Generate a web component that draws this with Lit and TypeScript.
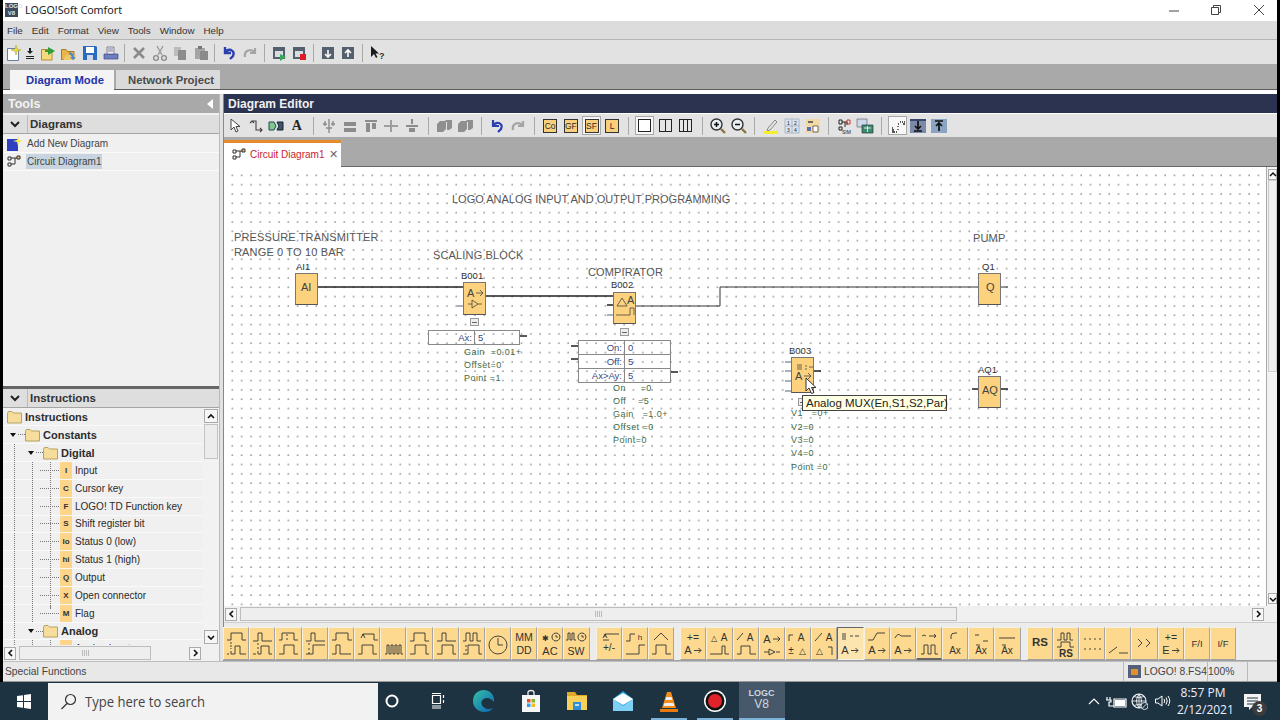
import { css, html, LitElement, svg } from 'lit';
import { customElement } from 'lit/decorators.js';

// canvas origin in page coordinates, diagram data below is given in page px
const OX = 224;
const OY = 167;

type Txt = [number, number, string, number?, boolean?];
interface PalBtn {
  d?: string;
  t?: Txt[];
  on?: boolean;
  low?: boolean;
}

// small arrow drawn next to the A / E of the analog buttons
const AR = 'M14 23.500H21M18.500 21L21 23.500L18.500 26';
const A: Txt = [8, 27, 'A', 11];

const PALETTE: PalBtn[][] = [
  [
    { d: 'M4 13H8V6H19V13H23M8 15V17M4 27H6M8 20V18M8 21V22M8 24V27H12V19H17V27H23' },
    { d: 'M4 14H9V6H13V14H23M9 16V18M4 27H7M9 20V22M9 24V27H12V19H20V27H23' },
    { d: 'M4 13H7V6H19V13H23M12 7V9M12 11V13M4 27H9V18H19V27H23' },
    { d: 'M4 14H9V6H13V14H23M7 16V18M7 21V23M4 27H11V18H23M7 25V27' },
    { d: 'M4 13H8V6H20V13H24M4 27H8V18H12V27H23' },
    { d: 'M9 9V7H20V13H24M7 11L9 7L11 11M4 27H8V18H19V27H23' },
    { d: 'M5 27H7V18H9V27H11V18H13V27H15V18H17V27H19V18H21V27H23' },
    { d: 'M4 14H8V6H19V14H23M4 27H9V18H20V27H23' },
    { d: 'M4 14H9V6H13V14H23M4 27H9V18H20V27H23' },
    { d: 'M4 14H7V6H11V14H14V6H18V14H22M4 27H9V18H20V27H23M7 18V20M7 22V24' },
    { d: 'M13 11V18H18M22 18A9 9 0 1 1 4 18A9 9 0 1 1 22 18' },
    { t: [[13, 14, 'MM', 10.5], [13, 27, 'DD', 10.5]] },
    { d: 'M19 6A4 4 0 1 1 18.900 6M19 8V10H21', t: [[8, 14, '✱', 8], [13, 28, 'AC', 11]] },
    { d: 'M3 13H5V6H7V13H9V6H11V13H13M19 6A4 4 0 1 1 18.900 6M19 8V10H21', t: [[13, 28, 'SW', 10.5]] },
  ],
  [
    { d: 'M9 10V7H23M7 11L9 7L11 11M7 13H13', t: [[13, 24, '+/-', 10]] },
    { d: 'M4 14H8V7H13M4 27H17V18H23', t: [[18, 13, 'h', 8]] },
    { d: 'M6 13L13 6L20 13M4 27H8V18H18V27H23' },
  ],
  [
    { d: AR, t: [[13, 14, '+=', 10.5], A] },
    { d: 'M4 27H16V19H19V27H23', t: [[8, 14, '△', 8], [18, 14, 'A', 10]] },
    { d: 'M4 13L10 6M4 27H8V19H17V27H23', t: [[17, 14, 'A', 10]] },
    { d: 'M5 25H10M17 25H21M10 22L16 25L10 28ZM14 12H21M18.500 9.500L21 12L18.500 14.500', t: [[8, 16, 'A', 11]] },
    { d: 'M4 14V8H8', t: [[16, 14, 'A', 10], [6, 27, '±', 10], [17, 27, '△', 9]] },
    { d: 'M4 14L11 6M17 20H21V28', t: [[18, 14, 'A', 10], [8, 27, '△', 9]] },
    { d: `M6 6V13M8 6V13M13 9H16M18 9H22${AR}`, on: true, t: [A] },
    { d: `M4 13H9L13 6H21${AR}`, t: [A] },
    { d: `M5 11Q8 5 11 9H21${AR}`, t: [A] },
    { d: 'M5 27H8V18H12V27H15V18H19V27H22M6 9Q8 7 10 9M13 9H20M18 7L20 9L18 11', low: true },
    { d: 'M9 12V9Q9 6 13 6H15', t: [[13, 27, 'Ax', 10]] },
    { d: 'M7 8H11M15 14H20M8 18H12', t: [[13, 27, 'Ax', 10]] },
    { d: 'M5 11H21M8 18H12', t: [[13, 27, 'Ax', 10]] },
  ],
  [
    { t: [[13, 19, 'RS', 11.5, true]] },
    { d: 'M4 13H8V6H11V13H14V6H17V13H20M4 20H8V15H17V20H21', t: [[13, 30, 'RS', 10, true]] },
    { d: 'M5 12H7M10 12H12M15 12H17M20 12H22M5 22H7M10 22H12M15 22H17M20 22H22' },
    { d: 'M4 26L12 20M14 26H23' },
    { d: 'M7 12L11 16L7 20M15 12L19 16L15 20' },
    { d: AR, t: [[13, 14, '+=', 10.5], [8, 27, 'E', 11]] },
    { t: [[13, 20, 'F/I', 9.5]] },
    { t: [[13, 20, 'I/F', 9.5]] },
  ],
];

const MENU = ['File', 'Edit', 'Format', 'View', 'Tools', 'Window', 'Help'];

const LEAVES = [
  ['I', 'Input'],
  ['C', 'Cursor key'],
  ['F', 'LOGO! TD Function key'],
  ['S', 'Shift register bit'],
  ['lo', 'Status 0 (low)'],
  ['hi', 'Status 1 (high)'],
  ['Q', 'Output'],
  ['X', 'Open connector'],
  ['M', 'Flag'],
];

// text on the canvas: x, centre y, text, class
const LABELS: [number, number, string, string][] = [
  [452, 199, 'LOGO ANALOG INPUT AND OUTPUT PROGRAMMING', 'note wide'],
  [234, 237, 'PRESSURE TRANSMITTER', 'note'],
  [234, 252, 'RANGE 0 TO 10 BAR', 'note'],
  [433, 255, 'SCALING BLOCK', 'note'],
  [588, 272, 'COMPIRATOR', 'note'],
  [973, 238, 'PUMP', 'note'],
  [296, 267, 'AI1', 'tag'],
  [461, 276, 'B001', 'tag'],
  [611, 285, 'B002', 'tag'],
  [789, 351, 'B003', 'tag'],
  [982, 267, 'Q1', 'tag'],
  [978, 370, 'AQ1', 'tag'],
  [464, 352, 'Gain  =0.01+', 'par'],
  [464, 365, 'Offset=0', 'par'],
  [464, 378, 'Point =1', 'par'],
  [613, 388, 'On     =0', 'par'],
  [613, 401, 'Off    =5', 'par'],
  [613, 414, 'Gain   =1.0+', 'par'],
  [613, 427, 'Offset =0', 'par'],
  [613, 440, 'Point=0', 'par'],
  [791, 413, 'V1   =0+', 'par'],
  [791, 427, 'V2=0', 'par'],
  [791, 440, 'V3=0', 'par'],
  [791, 453, 'V4=0', 'par'],
  [791, 467, 'Point =0', 'par'],
];

const BLOCKS: { x: number; y: number; h: number; g: unknown }[] = [
  { x: 295, y: 273, h: 32, g: svg`<text x="5" y="17" class="bt">AI</text>` },
  {
    x: 463,
    y: 282,
    h: 33,
    g: svg`<text x="3" y="14" class="bt">A</text><path d="M12 10H19M16 7L19 10L16 13M4 21H8M14 21H18M8 17L14 21L8 25Z"/>`,
  },
  {
    x: 613,
    y: 292,
    h: 32,
    g: svg`<path d="M3 13L8 5L13 13ZM2 22H16V15H20V22"/><text x="13" y="11" class="bt">A</text>`,
  },
  {
    x: 791,
    y: 357,
    h: 36,
    g: svg`<path d="M5 7H10M5 9H10M5 11H10M13 8H15M13 11H15M17 9H21M12 18H19M16 15L19 18L16 21"/><text x="3" y="22" class="bt">A</text>`,
  },
  { x: 978, y: 273, h: 32, g: svg`<text x="7" y="17" class="bt">Q</text>` },
  { x: 978, y: 376, h: 32, g: svg`<text x="3" y="17" class="bt">AQ</text>` },
];

const TABLES = [
  { x: 428, y: 330, w: 92, split: 46, rows: [['Ax:', '5']] },
  { x: 578, y: 340, w: 93, split: 46, rows: [['On:', '0'], ['Off:', '5'], ['Ax>Ay:', '5']] },
];

const COLLAPSERS = [[470, 318], [620, 328], [798, 398]];

const ico = (inner: unknown, w = 18, h = 18) =>
  html`<svg class="ic" width=${w} height=${h} viewBox="0 0 ${w} ${h}">${inner}</svg>`;

const bars = (c = '#8c8c8c') => svg`<path fill=${c} d="M3 5H15V9H3ZM3 11H15V15H3Z"/>`;
const sq2 = svg`<path fill="#8f8f8f" d="M2 7L5 4H11V12L8 15H2ZM9 5L11 3H17V11L14 13H12V5Z"/>`;
const yellowBtn = (t: string, sel = false) =>
  html`<span class="yb ${sel ? 'sel' : ''}"><b>${t}</b></span>`;

// main toolbar: [width, icon] or null for a separator
const MAIN_TOOLS: ([number, unknown] | null)[] = [
  [19, ico(svg`<path fill="#fff" stroke="#6a7ea8" d="M3.500 4.500H12L14.500 7V16.500H3.500Z"/><path d="M12 1L13 5L17 6L13 7L12 11L11 7L7 6L11 5Z" fill="#f4e23a" stroke="#9a9a20" stroke-width=".5"/>`)],
  [15, ico(svg`<path d="M6 4H8V7H10L7 10L4 7H6ZM3 13H11V12H3ZM3 15H11V14H3Z" fill="#222"/>`, 14, 18)],
  [21, ico(svg`<path fill="#f6d97a" stroke="#b09030" d="M2.500 5.500H13V16H2.500Z"/><path d="M9 3L16 7L9 11V8H6V6H9Z" fill="#2f9e3a"/>`)],
  [21, ico(svg`<path fill="#e9b44c" stroke="#a77c22" d="M1.500 5.500H6L7.500 7.500H14V15.500H1.500Z"/><path d="M6 11L16 11L14 16H3Z" fill="#f0c868"/><path d="M9 8Q14 9 14 13H16L13 16L10 13H12Q11 11 9 10Z" fill="#4a8ad0"/>`)],
  [21, ico(svg`<path fill="#2a6cc0" d="M2 2H15L16 3V16H2Z"/><path fill="#fff" d="M5 3H13V9H5Z"/><path fill="#cfd8e4" d="M6 11H12V16H6Z"/>`)],
  [21, ico(svg`<path fill="#6d7fc0" stroke="#39478c" stroke-width=".7" d="M2 10H16V15H2Z"/><path fill="#eef" stroke="#556" stroke-width=".7" d="M5 3H12V10H5Z"/><path d="M6 5H11M6 7H11" stroke="#556" stroke-width=".7"/>`)],
  null,
  [21, ico(svg`<path d="M4 4L14 14M14 4L4 14" stroke="#8a8a8a" stroke-width="2.600"/>`)],
  [20, ico(svg`<path d="M6 2L11 11M12 2L7 11" stroke="#9a9a9a" stroke-width="1.400"/><circle cx="5" cy="14" r="2.400" fill="none" stroke="#8a8a8a" stroke-width="1.300"/><circle cx="13" cy="14" r="2.400" fill="none" stroke="#8a8a8a" stroke-width="1.300"/>`)],
  [21, ico(svg`<path fill="#bcbcbc" d="M3 3H10V12H3Z"/><path fill="#8c8c8c" d="M7 6H15V16H7Z"/>`)],
  [20, ico(svg`<path fill="#a5a5a5" d="M3 4H13V15H3Z"/><path fill="#8a8a8a" d="M8 7H16V16H8Z"/><path fill="#777" d="M6 2H10V5H6Z"/>`)],
  null,
  [21, ico(svg`<path d="M5 3V9H11M5 9Q7 5 11 6Q15 8 13 12L10 15" fill="none" stroke="#2a3fb0" stroke-width="2.400"/>`)],
  [21, ico(svg`<path d="M14 4V9H9M14 9Q11 5 7 6.500Q3 8 4 13" fill="none" stroke="#a4a4a4" stroke-width="2.200"/>`)],
  null,
  [21, ico(svg`<path fill="#55606e" d="M3 3H15V15H3Z"/><path fill="#d8dde4" d="M5 7H13V13H5Z"/><path fill="#34a853" d="M10 10L16 13L10 17Z"/>`)],
  [20, ico(svg`<path fill="#55606e" d="M3 3H15V15H3Z"/><path fill="#d8dde4" d="M5 7H13V13H5Z"/><path fill="#e01b24" d="M10 10H16V16H10Z"/>`)],
  null,
  [21, ico(svg`<path fill="#55606e" d="M3 3H15V15H3Z"/><path d="M9 6V12M6 10L9 13L12 10" fill="none" stroke="#fff" stroke-width="1.600"/>`)],
  [20, ico(svg`<path fill="#55606e" d="M3 3H15V15H3Z"/><path d="M9 13V7M6 9L9 6L12 9" fill="none" stroke="#fff" stroke-width="1.600"/>`)],
  null,
  [21, ico(svg`<path d="M4 2V13L7 10L9 14L10.500 13L8.500 9.500H12Z" fill="#1a1a1a"/><text x="12" y="15" font-size="9" font-weight="700" font-family="Liberation Sans" fill="#333">?</text>`)],
];

const EDIT_TOOLS: (unknown | null)[] = [
  ico(svg`<path d="M5 2V13L8 10L10 15L12 14L10 9.500H14Z" fill="#fff" stroke="#444"/>`),
  ico(svg`<path d="M5 4H9V13H15M3 6L5 4L7 6M13 11L15 13L13 15" fill="none" stroke="#444" stroke-width="1.100"/>`),
  ico(svg`<path d="M2 5H7L9 9L7 13H2Z" fill="#7fc98f" stroke="#245"/><path d="M10 5H16V13H10L12 9Z" fill="#456" stroke="#123"/>`),
  html`<span class="bigA">A</span>`,
  null,
  ico(svg`<path d="M9 2V16M5 4V9M13 4V9M3 7H7M11 7H15M6 11H12" stroke="#8c8c8c" stroke-width="1.400"/>`),
  ico(bars()),
  ico(svg`<path fill="#8c8c8c" d="M3 3H15V5H3ZM4 6H8V15H4ZM10 6H14V12H10Z"/>`),
  ico(svg`<path fill="#8c8c8c" d="M2 8H8V10H2ZM10 8H16V10H10ZM8 3H10V15H8Z" opacity=".8"/>`),
  ico(svg`<path fill="#8c8c8c" d="M3 8H15V10H3ZM8 2H10V7H8ZM6 11H12V15H6Z"/>`),
  null,
  ico(sq2),
  ico(sq2),
  null,
  ico(svg`<path d="M5 3V9H11M5 9Q7 5 11 6Q15 8 13 12L10 15" fill="none" stroke="#2a3fb0" stroke-width="2.200"/>`),
  ico(svg`<path d="M14 4V9H9M14 9Q11 5 7 6.500Q3 8 4 13" fill="none" stroke="#a4a4a4" stroke-width="2.200"/>`),
  null,
  yellowBtn('Co'),
  yellowBtn('GF'),
  yellowBtn('SF', true),
  yellowBtn('L'),
  null,
  html`<span class="lay sel"><i></i></span>`,
  html`<span class="lay"><i class="c2"></i></span>`,
  html`<span class="lay"><i class="c3"></i></span>`,
  null,
  ico(svg`<circle cx="7.500" cy="7.500" r="5.500" fill="#e8eef4" stroke="#333" stroke-width="1.400"/><path d="M5 7.500H10M7.500 5V10" stroke="#111" stroke-width="1.500"/><path d="M12 12L16 16" stroke="#8a7440" stroke-width="2.400"/>`),
  ico(svg`<circle cx="7.500" cy="7.500" r="5.500" fill="#e8eef4" stroke="#333" stroke-width="1.400"/><path d="M5 7.500H10" stroke="#111" stroke-width="1.500"/><path d="M12 12L16 16" stroke="#8a7440" stroke-width="2.400"/>`),
  null,
  ico(svg`<path d="M6 11L13 3L15 5L8 13L5 14Z" fill="#e4e4e4" stroke="#888"/><path d="M2 14H16V17H2Z" fill="#f4ee2e"/>`),
  ico(svg`<path fill="#dbe4ee" stroke="#8a9ab0" stroke-width=".6" d="M2 2H16V16H2Z"/><path d="M9 2V16M2 9H16" stroke="#8a9ab0" stroke-width=".6"/><text x="4" y="8" class="ti">1</text><text x="11" y="8" class="ti">2</text><text x="4" y="15" class="ti">3</text><text x="11" y="15" class="ti">4</text>`),
  ico(svg`<path fill="#f2d9a8" d="M2 2H16V16H2Z"/><path d="M4 5H9" stroke="#444" stroke-width="1.500"/><path fill="#5a6fc0" d="M3 10H7V14H3Z"/><path fill="#fff" stroke="#333" stroke-width=".7" d="M9 9H14V15H9Z"/>`),
  null,
  ico(svg`<path fill="none" stroke="#222" d="M3 3H6V7H3ZM3 10H6V13H3ZM6 5H11V8M9 5V10"/><path fill="none" stroke="#c33" d="M11 3H14V7H11Z"/><text x="6" y="17" class="ti">SIM</text>`),
  ico(svg`<path fill="#cdd9e6" stroke="#667" stroke-width=".7" d="M1 2H11V10H1Z"/><path fill="#3e8a6e" stroke="#234" stroke-width=".7" d="M6 8H17V16H6Z"/><path d="M8 11H15M11.500 9V15" stroke="#fff" stroke-width=".8"/>`),
  null,
  html`<span class="lay dots">${ico(svg`<path d="M3 15H6M7 15H8M9 13V12M9 10V9M9 7H10M11 5H12M13 5H14M15 5H16M14 7H16M3 13H5M3 11H4" stroke="#222" stroke-width="1.300"/>`, 18, 18)}</span>`,
  ico(svg`<path fill="#7a8aa8" d="M1 2H17V16H1Z"/><path fill="#39476e" d="M1 2H17V4H1Z"/><path d="M9 4V12M6 9L9 12L12 9M5 14H13" fill="none" stroke="#111" stroke-width="1.700"/>`),
  ico(svg`<path fill="#8aa4c2" d="M1 2H17V16H1Z"/><path d="M9 14V7M6 9L9 6L12 9M5 4H13" fill="none" stroke="#111" stroke-width="1.700"/>`),
];

@customElement('app-root')
export class AppRoot extends LitElement {
  static override styles = css`
    :host {
      display: block;
      width: 1280px;
      height: 720px;
      overflow: hidden;
      background: #000;
      font-family: 'Liberation Sans', Arial, sans-serif;
      font-size: 11px;
      color: #2a2a2a;
    }
    .win {
      height: 682px;
      margin: 0 3px;
      display: flex;
      flex-direction: column;
      background: #fff;
    }
    svg {
      display: block;
    }
    .ic {
      flex: none;
    }

    /* title + menu */
    .title {
      height: 21px;
      background: #fff;
      display: flex;
      align-items: center;
      padding: 0 0 2px 2px;
      box-sizing: border-box;
      font: 10.700px 'Noto Sans', sans-serif;
      color: #222;
    }
    .app-ico {
      width: 13px;
      height: 14px;
      margin-right: 7px;
      background: #3d4a5c;
      color: #dfe4ea;
      font: 700 6px/7px 'Liberation Sans', sans-serif;
      text-align: center;
    }
    .caps {
      margin-left: auto;
      margin-right: -3px;
      display: flex;
      color: #333;
    }
    .caps span {
      width: 42.500px;
      display: flex;
      justify-content: center;
    }
    .menu {
      height: 17px;
      padding: 1px 0 0 4px;
      background: #dcdcdc;
      border-bottom: 1px solid #b4b4b4;
      display: flex;
      align-items: center;
      gap: 9px;
      font-size: 9.800px;
      color: #333;
    }
    .bar {
      height: 23px;
      padding-top: 1px;
      background: #e2e2e2;
      display: flex;
      align-items: center;
    }
    .cell {
      display: flex;
      justify-content: center;
      align-items: center;
      flex: none;
    }
    .sep {
      width: 1px;
      height: 18px;
      background: #a8a8a8;
      margin: 0 3.400px;
      flex: none;
    }
    .band {
      background: #a9a9a9;
      border-bottom: 1px solid #5c5c5c;
      display: flex;
      align-items: flex-end;
      padding-left: 7px;
      gap: 2px;
      box-sizing: border-box;
      height: 26px;
      font-weight: 700;
      font-size: 11.300px;
    }
    .mode {
      height: 19px;
      display: flex;
      align-items: center;
      justify-content: center;
      width: 104px;
      padding-left: 6px;
      box-sizing: border-box;
      background: #dadada;
      color: #4a4a4a;
    }
    .mode.on {
      background: #f4f4f4;
      color: #2433a8;
      height: 20px;
      margin-bottom: -1px;
    }
    .gap {
      height: 4px;
      background: #fff;
    }

    /* work area */
    .work {
      flex: 1;
      min-height: 0;
      display: flex;
    }
    .left {
      width: 216px;
      display: flex;
      flex-direction: column;
      background: #f0f0f0;
      flex: none;
    }
    .split {
      width: 5px;
      background: #e2e2e2;
      border-left: 1px solid #bbb;
      border-right: 1px solid #888;
      box-sizing: border-box;
      flex: none;
    }
    .tools-h {
      height: 19px;
      background: #a9a9a9;
      color: #f4f4f4;
      font-weight: 700;
      font-size: 12.500px;
      display: flex;
      align-items: center;
      justify-content: space-between;
      padding: 0 6px 0 5px;
      margin-bottom: 2px;
    }
    .tools-h i {
      border: 5px solid transparent;
      border-right: 6px solid #fff;
      border-left: 0;
    }
    .sec {
      height: 19px;
      background: #dedede;
      display: flex;
      align-items: center;
      font-weight: 700;
      font-size: 11.500px;
      color: #333;
      flex: none;
      border-bottom: 1px solid #a5a5a5;
      box-sizing: border-box;
    }
    .sec .chev {
      width: 24px;
      height: 100%;
      border-right: 1px solid #bbb;
      margin-right: 2px;
      display: flex;
      align-items: center;
      justify-content: center;
    }
    .list {
      flex: 1;
      padding-top: 1px;
    }
    .li {
      height: 18px;
      display: flex;
      align-items: center;
      padding-left: 3px;
      border-bottom: 1px solid #fafafa;
      box-sizing: border-box;
      font-size: 10px;
      color: #444;
      gap: 3px;
    }
    .li span {
      padding: 2px 1px;
    }
    .li .hl {
      background: #c8d4e0;
    }
    .rule {
      height: 3px;
      background: #666;
      flex: none;
    }
    .tree {
      height: 237px;
      display: flex;
      flex: none;
    }
    .rows {
      flex: 1;
      overflow: hidden;
      min-width: 0;
      padding-top: 0.500px;
    }
    .row {
      height: 17.850px;
      display: flex;
      align-items: center;
      border-bottom: 1px solid #fafafa;
      box-sizing: border-box;
      white-space: nowrap;
      font-size: 10px;
    }
    .row b {
      font-size: 11px;
      color: #2c2c2c;
    }
    .g {
      width: 18px;
      height: 100%;
      flex: none;
      box-sizing: border-box;
      background: linear-gradient(#777 50%, transparent 50%) 11px 0 / 1px 2px repeat-y;
    }
    .g.hook {
      width: 21px;
      background:
        linear-gradient(90deg, #777 50%, transparent 50%) 11px 50% / 2px 1px repeat-x,
        linear-gradient(#777 50%, transparent 50%) 11px 0 / 1px 2px repeat-y;
    }
    .g.hook.end {
      background:
        linear-gradient(90deg, #777 50%, transparent 50%) 11px 50% / 2px 1px repeat-x,
        linear-gradient(#777 50%, transparent 50%) 11px 0 / 1px 50% no-repeat;
    }
    .leaf {
      width: 12px;
      height: 100%;
      background: #fcd48a;
      font-size: 8px;
      font-weight: 700;
      display: flex;
      align-items: center;
      justify-content: center;
      margin-right: 3px;
      color: #333;
      flex: none;
    }
    .tw {
      width: 18px;
      height: 100%;
      flex: none;
      display: flex;
      align-items: center;
      padding-left: 7px;
      box-sizing: border-box;
    }
    .tw i {
      border: 3.500px solid transparent;
      border-top: 4px solid #111;
      border-bottom: 0;
    }
    .dash {
      width: 7px;
      height: 1px;
      flex: none;
      margin-left: -3px;
      background: linear-gradient(90deg, #777 50%, transparent 50%) 0 0 / 2px 1px repeat-x;
    }
    .fold {
      margin-right: 3px;
    }
    .lead {
      width: 4px;
      flex: none;
    }

    /* scrollbars */
    .vs {
      width: 16px;
      flex: none;
      background: #f2f2f2;
      display: flex;
      flex-direction: column;
      box-sizing: border-box;
    }
    .hs {
      height: 16px;
      flex: none;
      background: #f0f0f0;
      display: flex;
      align-items: center;
      padding: 0 1px;
      box-sizing: border-box;
    }
    .ab {
      width: 12px;
      height: 13px;
      background: #f6f6f6;
      border: 1px solid #aaa;
      box-sizing: border-box;
      display: flex;
      align-items: center;
      justify-content: center;
      flex: none;
    }
    .thumb {
      height: 14px;
      margin-left: 3px;
      border: 1px solid #bdbdbd;
      box-sizing: border-box;
      flex: none;
      background: repeating-linear-gradient(90deg, #bbb 0 1px, transparent 1px 2px) center / 7px 6px no-repeat #eee;
    }
    .thumb.small {
      width: 132px;
    }
    .thumb.wide {
      width: 717px;
    }
    .fill {
      flex: 1;
    }
    .vs .ab {
      width: 14px;
      height: 14px;
      margin: 1px;
    }
    .vthumb {
      width: 14px;
      margin: 0 1px;
      height: 35px;
      border: 1px solid #c2c2c2;
      background: #ececec;
      box-sizing: border-box;
      flex: none;
    }

    /* editor */
    .right {
      flex: 1;
      min-width: 0;
      display: flex;
      flex-direction: column;
    }
    .ed-h {
      height: 19px;
      margin-bottom: 1px;
      background: #2c3350;
      color: #f0f0f0;
      font-weight: 700;
      font-size: 12px;
      display: flex;
      align-items: center;
      padding-left: 4px;
    }
    .ed-bar {
      height: 23px;
      background: #e3e3e3;
      display: flex;
      align-items: center;
      padding-left: 0.500px;
    }
    .ed-bar .cell {
      width: 20.700px;
    }
    .ed-bar .sep {
      margin: 0 5.300px;
    }
    .bigA {
      font: 700 14px 'Liberation Serif', serif;
      color: #222;
    }
    .yb {
      width: 19px;
      height: 19px;
      display: flex;
      align-items: center;
      justify-content: center;
    }
    .yb b {
      width: 14px;
      height: 14px;
      border: 1px solid #333;
      box-sizing: border-box;
      background: #f9cf7c;
      font-size: 8.500px;
      font-weight: 400;
      display: flex;
      align-items: center;
      justify-content: center;
    }
    .yb.sel {
      background: #f5f5f5;
      box-shadow: inset 0 0 0 1px #a8a8a8;
    }
    .lay {
      width: 19px;
      height: 19px;
      display: flex;
      align-items: center;
      justify-content: center;
    }
    .lay i {
      width: 11px;
      height: 11px;
      border: 1px solid #222;
      box-sizing: content-box;
      background: #fff;
    }
    .lay i.c2 {
      background: linear-gradient(90deg, #e6e6e6 5px, #222 5px, #222 6px, #e6e6e6 6px);
    }
    .lay i.c3 {
      background: linear-gradient(90deg, #e6e6e6 3px, #222 3px, #222 4px, #e6e6e6 4px, #e6e6e6 7px, #222 7px, #222 8px, #e6e6e6 8px);
    }
    .lay.sel,
    .lay.dots {
      background: #f8f8f8;
      box-shadow: inset 0 0 0 1px #a8a8a8;
    }
    .tabs {
      height: 30px;
      background: #a9a9a9;
      border-bottom: 1px solid #666;
      box-sizing: border-box;
      display: flex;
      align-items: flex-end;
      flex: none;
    }
    .tab {
      width: 117px;
      height: 27px;
      margin-bottom: -1px;
      padding: 0 0 2px 7px;
      box-sizing: border-box;
      background: #fff;
      border-top: 3px solid #e48b2e;
      display: flex;
      align-items: center;
      color: #c8232c;
      font-size: 10px;
      gap: 2px;
      white-space: nowrap;
    }
    .tab .x {
      color: #666;
      font-size: 11px;
      margin-left: 3px;
    }
    .stage {
      flex: 1;
      min-height: 0;
      display: flex;
    }
    .canvas {
      flex: 1;
      min-width: 0;
      position: relative;
      overflow: hidden;
      background-color: #fff;
      background-image: radial-gradient(circle at 1px 1px, #a0a0a0 0.600px, transparent 0.900px);
      background-size: 9.330px 9.330px;
      background-position: -2px -2px;
      color: #444;
    }
    .wires {
      position: absolute;
      left: 0;
      top: 0;
    }
    .lbl {
      position: absolute;
      white-space: pre;
      line-height: 14px;
    }
    .note {
      font-size: 11px;
      color: #555;
      letter-spacing: 0.150px;
    }
    .note.wide {
      letter-spacing: 0;
    }
    .tag {
      font-size: 9.500px;
      color: #333;
    }
    .par {
      font-size: 9px;
      color: #3f6b47;
      letter-spacing: 0.450px;
    }
    .block {
      position: absolute;
      width: 23px;
      box-sizing: border-box;
      background: #fcd27e;
      border: 1px solid #777;
      border-bottom-color: #555;
    }
    .block svg {
      fill: none;
      stroke: #444;
      stroke-width: 0.800;
    }
    .bt {
      font-size: 11px;
      fill: #444;
      stroke: none;
    }
    .ptable {
      position: absolute;
      border: 1px solid #888;
      box-sizing: border-box;
      font-size: 9.500px;
      color: #3a4a80;
    }
    .pr {
      height: 13px;
      display: flex;
      border-top: 1px solid #888;
      align-items: center;
    }
    .pr:first-child {
      border-top: 0;
    }
    .pr span:first-child {
      padding-right: 2px;
      box-sizing: border-box;
      border-right: 1px solid #888;
      height: 100%;
      display: flex;
      align-items: center;
      justify-content: flex-end;
      flex: none;
    }
    .pr span:last-child {
      padding-left: 3px;
    }
    .coll {
      position: absolute;
      width: 9px;
      height: 8px;
      box-sizing: border-box;
      border: 1px solid #999;
      background: linear-gradient(#666, #666) center / 5px 1px no-repeat #eee;
    }
    .tip {
      position: absolute;
      left: 578px;
      top: 228px;
      height: 16px;
      width: 145px;
      box-sizing: border-box;
      border: 1px solid #444;
      background: #ffffe3;
      color: #222;
      font-size: 11.500px;
      line-height: 14px;
      padding-left: 3px;
      white-space: nowrap;
    }
    .cursor {
      position: absolute;
      left: 581px;
      top: 210px;
    }
    .right-s {
      width: 11px;
      background: #f2f2f2;
      border-left: 1px solid #aaa;
    }
    .right-s .ab {
      width: 9px;
      height: 11px;
      margin: 2px 0 0 1px;
    }
    .right-s .ab.dn {
      margin: 0 0 2px 1px;
    }
    .right-s .track {
      flex: 0 0 190px;
      border: 1px solid #ccc;
      background: #efefef;
      margin-left: 1px;
    }
    .pal {
      height: 39px;
      flex: none;
      background: #ececec;
      border-top: 1px solid #cfcfcf;
      border-bottom: 1px solid #a0a0a0;
      box-sizing: border-box;
      display: flex;
      align-items: flex-end;
      gap: 6px;
    }
    .pg {
      display: flex;
    }
    .pg:first-child {
      margin-left: -1px;
    }
    .pb {
      width: 26.200px;
      height: 33px;
      box-sizing: border-box;
      background: #fcd98e;
      border: 1px solid;
      border-color: #f6f0df #a5a5a5 #a0a0a0 #f6f0df;
    }
    .pb.on {
      background: #fde5b0;
      border-color: #666 #eee #eee #666;
    }
    .pb.low {
      border-bottom: 2px solid #666;
    }
    .pb svg {
      fill: none;
      stroke: #333;
      stroke-width: 0.900;
      margin: -1px;
    }
    .pt {
      fill: #333;
      stroke: none;
      text-anchor: middle;
      font-family: 'Liberation Sans', sans-serif;
    }
    .ti {
      font-size: 5px;
      fill: #222;
      stroke: none;
    }

    /* status bar */
    .status {
      height: 21px;
      flex: none;
      background: #e8e8e8;
      border-top: 1px solid #bdbdbd;
      border-bottom: 1px solid #999;
      box-sizing: border-box;
      display: flex;
      align-items: center;
      padding-left: 2px;
      font-size: 10.300px;
      color: #444;
      white-space: nowrap;
    }
    .status .fill {
      flex: 1;
    }
    .sb {
      height: 100%;
      border-left: 1px solid #bbb;
      display: flex;
      align-items: center;
      gap: 3px;
      box-sizing: border-box;
    }
    .sb.logo {
      width: 84px;
      padding-left: 4px;
    }
    .sb.zoom {
      width: 40px;
    }
    .sb.end {
      width: 30px;
    }

    /* taskbar */
    .task {
      height: 38px;
      background: #1e3342;
      display: flex;
      align-items: center;
      color: #fff;
    }
    .start {
      width: 48px;
      display: flex;
      justify-content: center;
    }
    .search {
      width: 330px;
      height: 37px;
      margin-top: 1px;
      background: #f2f2f2;
      color: #444;
      font: 14.500px 'Open Sans', sans-serif;
      display: flex;
      align-items: center;
      gap: 8px;
      padding-left: 12px;
      box-sizing: border-box;
    }
    .search span {
      transform-origin: left;
      transform: scaleX(0.900);
      white-space: nowrap;
    }
    .apps {
      display: flex;
      height: 100%;
      margin-left: -9px;
    }
    .app {
      width: 46.200px;
      height: 100%;
      display: flex;
      align-items: center;
      justify-content: center;
    }
    .app.run {
      background: linear-gradient(#7db3d8, #7db3d8) center bottom / 36px 2px no-repeat;
    }
    .app.cur {
      background: linear-gradient(#7db3d8, #7db3d8) center bottom / 46px 2px no-repeat #46586a;
    }
    .tile {
      width: 28px;
      height: 26px;
      background: #46586a;
      color: #cfd6dc;
      text-align: center;
      font: 700 9px/10px 'Liberation Sans', sans-serif;
    }
    .tile small {
      display: block;
      font-size: 12px;
      font-weight: 400;
      line-height: 12px;
    }
    .tray {
      margin-left: auto;
      display: flex;
      align-items: center;
      height: 100%;
    }
    .tr {
      width: 23px;
      display: flex;
      justify-content: center;
    }
    .clock {
      width: 52px;
      margin-left: 3px;
      text-align: center;
      white-space: nowrap;
      font: 12px/17px 'Open Sans', sans-serif;
      color: #eef;
    }
    .note-i {
      width: 46px;
      display: flex;
      justify-content: center;
      position: relative;
      margin-right: 5px;
    }
    .badge {
      position: absolute;
      left: 23px;
      top: 9px;
      width: 15px;
      height: 15px;
      border-radius: 50%;
      background: #3c3c3c;
      color: #fff;
      font: 700 10px/15px 'Liberation Sans', sans-serif;
      text-align: center;
    }
  `;

  private palIcon(b: PalBtn) {
    return html`<svg width="26" height="33" viewBox="0 0 26 33">
      ${b.d ? svg`<path d=${b.d} />` : ''}
      ${(b.t ?? []).map(
        ([x, y, s, size, bold]) =>
          svg`<text class="pt" x=${x} y=${y} font-size=${size ?? 10} font-weight=${bold ? 700 : 400}>${s}</text>`,
      )}
    </svg>`;
  }

  private folder() {
    return html`<svg class="fold ic" width="15" height="14" viewBox="0 0 15 14">
      <path d="M.5 3.500Q.5 1.500 2 1.500H5L6.500 3H14.500V13H.5Z" fill="#f6dd9b" stroke="#b8a263" />
    </svg>`;
  }

  private diagIcon() {
    return html`<svg class="ic" width="17" height="13" viewBox="0 0 17 13" fill="none" stroke="#333">
      <path d="M2 2H5V5H2ZM2 8H5V11H2ZM5 3H9V9H5M9 3H11" />
      <path d="M11 1H14V4H11Z" fill="#f0c060" />
    </svg>`;
  }

  private renderTree() {
    const guides = (n: number) => Array.from({ length: n }, () => html`<span class="g"></span>`);
    return html`<div class="rows">
      <div class="row"><span class="lead"></span>${this.folder()}<b>Instructions</b></div>
      <div class="row">
        <span class="tw"><i></i></span><span class="dash"></span>${this.folder()}<b>Constants</b>
      </div>
      <div class="row">
        ${guides(1)}<span class="tw"><i></i></span><span class="dash"></span>${this.folder()}<b>Digital</b>
      </div>
      ${LEAVES.map(
        ([k, t], i) => html`<div class="row">
          ${guides(2)}<span class="g hook ${i === LEAVES.length - 1 ? 'end' : ''}"></span>
          <span class="leaf">${k}</span>${t}
        </div>`,
      )}
      <div class="row">
        ${guides(1)}<span class="tw"><i></i></span><span class="dash"></span>${this.folder()}<b>Analog</b>
      </div>
      <div class="row">
        ${guides(2)}<span class="g hook"></span><span class="leaf">AI</span>Analog input
      </div>
    </div>`;
  }

  private renderCanvas() {
    return html`<div class="canvas">
      <svg class="wires" width="1042" height="439" viewBox="${OX} ${OY} 1042 439" fill="none">
        <path d="M317 287H463M486 296H613" stroke="#222" stroke-width="1.600" />
        <path d="M636 306H720V287H978M1001 287H1008" stroke="#333" stroke-width="1" />
        <path d="M457 306H463M607 315H613M785 362H791M785 371H791M785 381H791M785 391H791" stroke="#567" stroke-width="1" />
        <path d="M607 305H613M520 336H527M571 346H578M571 359H578M671 372H678M814 371H821M972 389H978M1001 389H1008" stroke="#222" stroke-width="1.600" />
      </svg>
      ${LABELS.map(
        ([x, y, t, c]) =>
          html`<span class="lbl ${c}" style="left:${x - OX}px;top:${y - OY - 7}px">${t}</span>`,
      )}
      ${BLOCKS.map(
        (b) => html`<div class="block" style="left:${b.x - OX}px;top:${b.y - OY}px;height:${b.h}px">
          <svg width="21" height=${b.h - 2} viewBox="0 0 21 ${b.h - 2}">${b.g}</svg>
        </div>`,
      )}
      ${COLLAPSERS.map(
        ([x, y]) => html`<span class="coll" style="left:${x - OX}px;top:${y - OY}px"></span>`,
      )}
      ${TABLES.map(
        (t) => html`<div class="ptable" style="left:${t.x - OX}px;top:${t.y - OY}px;width:${t.w}px">
          ${t.rows.map(
            ([k, v]) => html`<div class="pr">
              <span style="width:${t.split}px">${k}</span><span>${v}</span>
            </div>`,
          )}
        </div>`,
      )}
      <div class="tip">Analog MUX(En,S1,S2,Par)</div>
      <svg class="cursor" width="12" height="18" viewBox="0 0 12 18">
        <path d="M1 1V14L4 11L6.500 16.500L9 15.500L6.500 10.500H11Z" fill="#fff" stroke="#333" />
      </svg>
    </div>`;
  }

  override render() {
    const chev = ico(svg`<path d="M2 3L6 7L10 3" fill="none" stroke="#222" stroke-width="2"/>`, 12, 10);
    const hl = ico(svg`<path d="M6 2L3 5L6 8" fill="none" stroke="#111" stroke-width="1.600"/>`, 9, 10);
    const hr = ico(svg`<path d="M3 2L6 5L3 8" fill="none" stroke="#111" stroke-width="1.600"/>`, 9, 10);
    return html`
      <div class="win">
        <div class="title">
          <span class="app-ico">LOGO<br />V8</span>LOGO!Soft Comfort
          <span class="caps">
            <span>${ico(svg`<path d="M3 9H13" stroke="#444"/>`, 16, 16)}</span>
            <span>${ico(svg`<path d="M3.500 5.500H10.500V12.500H3.500ZM5.500 5.500V3.500H12.500V10.500H10.500" fill="none" stroke="#444"/>`, 16, 16)}</span>
            <span>${ico(svg`<path d="M3 3L13 13M13 3L3 13" stroke="#444"/>`, 16, 16)}</span>
          </span>
        </div>
        <div class="menu">${MENU.map((m) => html`<span>${m}</span>`)}</div>
        <div class="bar">
          ${MAIN_TOOLS.map((t) =>
            t ? html`<span class="cell" style="width:${t[0]}px">${t[1]}</span>` : html`<span class="sep"></span>`,
          )}
        </div>
        <div class="band">
          <span class="mode on">Diagram Mode</span><span class="mode">Network Project</span>
        </div>
        <div class="gap"></div>
        <div class="work">
          <div class="left">
            <div class="tools-h">Tools<i></i></div>
            <div class="sec"><span class="chev">${chev}</span>Diagrams</div>
            <div class="list">
              <div class="li">
                ${ico(svg`<path fill="#2e3fc4" d="M1 3H12V15H1Z"/><path d="M12 0L13 4L17 5L13 6L12 10L11 6L7 5L11 4Z" fill="#f3ea4a"/>`, 17, 15)}<span>Add New Diagram</span>
              </div>
              <div class="li">${this.diagIcon()}<span class="hl">Circuit Diagram1</span></div>
            </div>
            <div class="rule"></div>
            <div class="sec"><span class="chev">${chev}</span>Instructions</div>
            <div class="tree">
              ${this.renderTree()}
              <div class="vs">
                <span class="ab">${ico(svg`<path d="M2 6L5 3L8 6" fill="none" stroke="#111" stroke-width="1.600"/>`, 10, 9)}</span>
                <div class="vthumb"></div>
                <div class="fill"></div>
                <span class="ab">${ico(svg`<path d="M2 3L5 6L8 3" fill="none" stroke="#111" stroke-width="1.600"/>`, 10, 9)}</span>
              </div>
            </div>
            <div class="hs">
              <span class="ab">${hl}</span>
              <span class="thumb small"></span>
              <span class="fill"></span>
              <span class="ab" style="margin-right:17px">${hr}</span>
            </div>
          </div>
          <div class="split"></div>
          <div class="right">
            <div class="ed-h">Diagram Editor</div>
            <div class="ed-bar">
              ${EDIT_TOOLS.map((t) =>
                t ? html`<span class="cell">${t}</span>` : html`<span class="sep"></span>`,
              )}
            </div>
            <div class="tabs">
              <div class="tab">${this.diagIcon()}Circuit Diagram1<span class="x">✕</span></div>
            </div>
            <div class="stage">
              ${this.renderCanvas()}
              <div class="vs right-s">
                <span class="ab">${ico(svg`<path d="M1 5L4 2L7 5" fill="none" stroke="#111" stroke-width="1.500"/>`, 8, 8)}</span>
                <div class="track"></div>
                <div class="fill"></div>
                <span class="ab dn">${ico(svg`<path d="M1 3L4 6L7 3" fill="none" stroke="#111" stroke-width="1.500"/>`, 8, 8)}</span>
              </div>
            </div>
            <div class="hs">
              <span class="ab">${hl}</span>
              <span class="thumb wide"></span>
              <span class="fill"></span>
              <span class="ab" style="margin-right:12px">${hr}</span>
            </div>
            <div class="pal">
              ${PALETTE.map(
                (g) => html`<div class="pg">
                  ${g.map(
                    (b) => html`<span class="pb ${b.on ? 'on' : ''} ${b.low ? 'low' : ''}">${this.palIcon(b)}</span>`,
                  )}
                </div>`,
              )}
            </div>
          </div>
        </div>
        <div class="status">
          <span>Special Functions</span>
          <span class="fill"></span>
          <span class="sb logo">
            ${ico(svg`<path fill="#555f78" d="M0 0H13V13H0Z"/><path fill="#e0912c" d="M3 4H10V10H3Z"/>`, 13, 13)}LOGO! 8.FS4
          </span>
          <span class="sb zoom">100%</span>
          <span class="sb end"></span>
        </div>
      </div>
      <div class="task">
        <span class="start">
          ${ico(svg`<path fill="#fff" d="M1 3L7 2.200V8H1ZM8 2L15 1V8H8ZM1 9H7V14.800L1 14ZM8 9H15V16L8 15Z"/>`, 16, 17)}
        </span>
        <div class="search">
          ${ico(svg`<circle cx="10.500" cy="6.500" r="5" fill="none" stroke="#333" stroke-width="1.200"/><path d="M7 10.500L1.500 16" stroke="#333" stroke-width="1.300"/>`, 17, 17)}
          <span>Type here to search</span>
        </div>
        <div class="apps">
          <span class="app">${ico(svg`<circle cx="9" cy="9" r="5.500" fill="none" stroke="#fff" stroke-width="2"/>`)}</span>
          <span class="app">${ico(svg`<path d="M3.500 3.500H11.500V11.500H3.500ZM3 1.500H12M3 14H12M3 16H12M14.500 3V6M14.500 8V11" fill="none" stroke="#fff" stroke-width="1.200"/>`)}</span>
          <span class="app">${ico(svg`<defs><linearGradient id="ed" x1="0" y1="0" x2="1" y2="1"><stop offset="0" stop-color="#35c1a4"/><stop offset="1" stop-color="#0a63b8"/></linearGradient></defs><path fill="url(#ed)" d="M12 1C5 1 1 6 1 12C1 19 7 23 12 23C16 23 19 22 21 19C17 21 11 20 9.500 15C9 12 11 9 15 9C18 9 19 10 22 13C23 6 18 1 12 1Z"/>`, 24, 24)}</span>
          <span class="app">${ico(svg`<path d="M8 7V3.500Q8 1.500 11 1.500Q14 1.500 14 3.500V7" fill="none" stroke="#eee" stroke-width="1.300"/><path fill="#f4f6f8" d="M2 6H20V23H2Z"/><path fill="#e5502a" d="M7 10H10.500V13.500H7Z"/><path fill="#7fba2e" d="M11.500 10H15V13.500H11.500Z"/><path fill="#2aa4f0" d="M7 14.500H10.500V18H7Z"/><path fill="#fdba20" d="M11.500 14.500H15V18H11.500Z"/>`, 22, 24)}</span>
          <span class="app">${ico(svg`<path fill="#e2a72a" d="M1 3H9L11 6H21V21H1Z"/><path fill="#f8cf58" d="M1 7H21V21H1Z"/><path fill="#2f8ed8" d="M7 13H15V21H7Z"/><path fill="#bfe0f4" d="M9 15H13V17H9Z"/>`, 22, 24)}</span>
          <span class="app">${ico(svg`<path fill="#1f9ee0" d="M1 9L11 1L21 9V21H1Z"/><path fill="#7fd0f5" d="M1 9L11 16L21 9V21H1Z"/><path fill="#fff" d="M1 9L11 15L21 9L11 3Z"/>`, 22, 22)}</span>
          <span class="app run">${ico(svg`<path fill="#f28c1a" d="M8 3H12L17 19H3Z"/><path fill="#eee" d="M7.300 8H12.600L13.500 11H6.300ZM5.500 14H14.500L15.400 17H4.500Z"/><path fill="#e87a10" d="M1 20H19V23H1Z"/>`, 20, 24)}</span>
          <span class="app run">${ico(svg`<circle cx="12" cy="12" r="11" fill="#fff"/><circle cx="12" cy="12" r="9.500" fill="#111"/><circle cx="12" cy="12" r="7" fill="#e0222a"/>`, 24, 24)}</span>
          <span class="app run cur"><span class="tile">LOGC<small>V8</small></span></span>
        </div>
        <div class="tray">
          <span class="tr">${ico(svg`<path d="M2 8L7 3L12 8" fill="none" stroke="#fff" stroke-width="1.200"/>`, 14, 10)}</span>
          <span class="tr">${ico(svg`<path d="M1 3V6M4 3V6M0 6H5V8H3V12H8M8 5H20V13H8Z" fill="none" stroke="#fff" stroke-width="1.200"/><path d="M9 6H19V12H9Z" fill="#fff"/>`, 21, 15)}</span>
          <span class="tr">${ico(svg`<circle cx="8" cy="8" r="7" fill="none" stroke="#fff" stroke-width="1.100"/><path d="M1 8H15M8 1V15M3 3.500Q8 6 13 3.500M3 12.500Q8 10 13 12.500M8 1Q3 8 8 15M8 1Q13 8 8 15" fill="none" stroke="#fff" stroke-width=".8"/><circle cx="13.500" cy="13" r="3.500" fill="#1e3342" stroke="#fff" stroke-width=".8"/><path d="M11.500 15L15.500 11" stroke="#fff" stroke-width=".8"/>`, 17, 17)}</span>
          <span class="tr">${ico(svg`<path d="M1.500 6V10H4L8 13V3L4 6ZM10 6Q11.500 8 10 10M12 4.500Q14.500 8 12 11.500M14 3Q17.500 8 14 13" fill="none" stroke="#fff" stroke-width="1"/>`, 17, 16)}</span>
          <span class="clock">8:57 PM<br />2/12/2021</span>
          <span class="note-i">
            ${ico(svg`<path d="M1 2H18V15H9L6 18V15H1Z" fill="#f4f4f4"/><path d="M4 6H15M4 9H15M4 12H11" stroke="#1e3342"/>`, 19, 19)}
            <span class="badge">3</span>
          </span>
        </div>
      </div>
    `;
  }
}

declare global {
  interface HTMLElementTagNameMap {
    'app-root': AppRoot;
  }
}
